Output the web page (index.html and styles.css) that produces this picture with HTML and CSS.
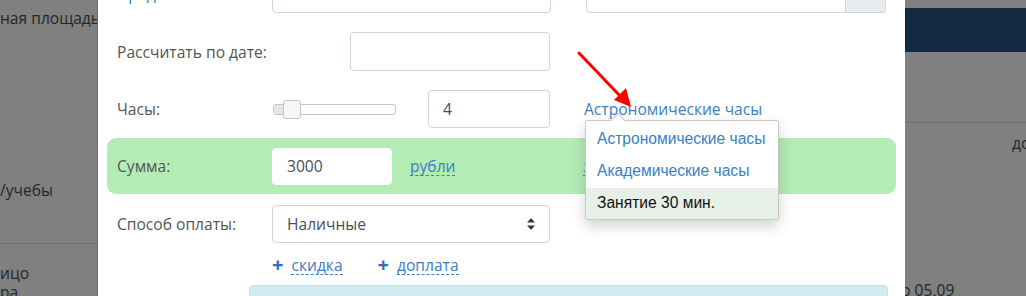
FILE: index.html
```html
<!DOCTYPE html>
<html lang="ru">
<head>
<meta charset="utf-8">
<link rel="stylesheet" href="styles.css">
</head>
<body>
<div class="page">
  <div class="bg-left">
    <div class="bg-text t1">ная площадь, д</div>
    <div class="bg-text t2">/учебы</div>
    <div class="bg-line"></div>
    <div class="bg-text t3">ицо</div>
    <div class="bg-text t4">ра</div>
  </div>
  <div class="bg-right">
    <div class="navy"></div>
    <div class="bg-line r"></div>
    <div class="bg-text t5">до</div>
    <div class="bg-text t6">р 05.09</div>
  </div>

  <div class="modal">
    <div class="row row-top">
      <div class="label blue">Предмет</div>
      <div class="input w279"></div>
      <div class="group">
        <div class="input grow"></div>
        <div class="addon"></div>
      </div>
    </div>

    <div class="row row-date">
      <div class="label wide">Рассчитать по дате:</div>
      <div class="input w200"></div>
    </div>

    <div class="row row-hours">
      <div class="label">Часы:</div>
      <div class="slider">
        <div class="range"></div>
        <div class="thumb"></div>
      </div>
      <div class="input w122 val">4</div>
      <div class="hours-wrap">
        <span class="link">Астрономические часы</span>
        <div class="dropdown">
          <div class="nub"></div>
          <div class="item">Астрономические часы</div>
          <div class="item">Академические часы</div>
          <div class="item active">Занятие 30 мин.</div>
        </div>
      </div>
    </div>

    <div class="sum">
      <div class="label">Сумма:</div>
      <div class="input w120 val">3000</div>
      <span class="link dashed rub">рубли</span>
      <span class="link dashed hidden-link">за</span>
    </div>

    <div class="row row-pay">
      <div class="label">Способ оплаты:</div>
      <div class="input w278 select">
        <span>Наличные</span>
        <svg class="caret" width="10" height="14" viewBox="0 0 10 14"><path d="M5 1 L9 5.5 H1 Z M1 8.5 H9 L5 13 Z" fill="#343a40"/></svg>
      </div>
    </div>

    <div class="row row-links">
      <span class="plus">+</span><span class="link dashed">скидка</span>
      <span class="plus p2">+</span><span class="link dashed">доплата</span>
    </div>

    <div class="info"></div>
  </div>

  <svg class="arrow" width="70" height="70" viewBox="0 0 70 70">
    <line x1="3" y1="3" x2="46" y2="48" stroke="#f00" stroke-width="3" stroke-linecap="round"/>
    <path d="M55 57 L38 50 L50 38 Z" fill="#f00"/>
  </svg>
</div>
</body>
</html>
```

FILE: styles.css
```css
* { box-sizing: border-box; }
html, body { margin: 0; padding: 0; }
body {
  width: 1026px;
  height: 296px;
  overflow: hidden;
  background: #808080;
  font-family: "Open Sans", "Liberation Sans", sans-serif;
  font-size: 15.6px;
  color: #555;
}
.page { position: relative; width: 1026px; height: 296px; overflow: hidden; }

.bg-left { position: absolute; left: 0; top: 0; width: 97px; height: 296px; }
.bg-right { position: absolute; left: 905px; top: 0; width: 121px; height: 296px; }
.bg-text { position: absolute; color: #262626; font-size: 15.6px; line-height: 18px; white-space: nowrap; }
.t1 { left: 0; top: 9px; }
.t2 { left: 0; top: 181px; }
.t3 { left: 0; top: 264px; }
.t4 { left: 0; top: 283px; }
.t5 { left: 107px; top: 134px; }
.t6 { left: -4px; top: 281px; }
.bg-line { position: absolute; left: 0; top: 243px; width: 97px; height: 1px; background: #6f6f6f; }
.bg-line.r { top: 122px; width: 121px; }
.navy { position: absolute; left: 0; top: 8px; width: 121px; height: 44px; background: #142940; }

.modal {
  position: absolute;
  left: 97px;
  top: 0;
  width: 808px;
  height: 296px;
  background: #fff;
  border-left: 1px solid #6a6a6a;
  padding: 0 0 0 19px;
  overflow: hidden;
  z-index: 2;
}

.row { display: flex; align-items: center; }
.label { width: 155px; flex: none; color: #555; }
.label.wide { width: 233px; }
.blue { color: #337ab7; }

.input {
  height: 38px;
  border: 1px solid #ced4da;
  border-radius: 4px;
  background: #fff;
  flex: none;
  display: flex;
  align-items: center;
  padding: 0 14px;
  color: #495057;
  font-size: 15.6px;
}
.w279 { width: 279px; }
.w200 { width: 200px; }
.w122 { width: 122px; }
.w120 { width: 120px; border-color: #fff; }
.w278 { width: 278px; }

.row-top { margin-top: -25px; height: 38px; }
.group { display: flex; width: 300px; margin-left: 35px; height: 38px; }
.input.grow { flex: 1; border-radius: 4px 0 0 4px; }
.addon { width: 40px; height: 38px; background: #e9ecef; border: 1px solid #ced4da; border-left: none; border-radius: 0 4px 4px 0; }

.row-date { margin-top: 19px; }
.row-date .input { height: 39px; }

.row-hours { margin-top: 19px; height: 38px; }
.slider {
  position: relative;
  width: 123px;
  height: 11px;
  border: 1px solid #c5c5c5;
  border-radius: 3px;
  background: #fff;
  margin-left: 1px;
  flex: none;
}
.range { position: absolute; left: 0; top: 0; width: 10px; height: 9px; background: #e6e6e6; border-radius: 2px 0 0 2px; }
.thumb {
  position: absolute;
  left: 9px;
  top: -5px;
  width: 18px;
  height: 19px;
  background: #f6f6f6;
  border: 1px solid #c5c5c5;
  border-radius: 3px;
}
.row-hours .input { margin-left: 32px; }
.hours-wrap { position: relative; margin-left: 34px; line-height: 20px; }
.link { color: #3a7fc1; }
.dashed { border-bottom: 1px dashed #3a7fc1; line-height: 18px; }

.dropdown {
  position: absolute;
  left: 1px;
  top: 21px;
  width: 194px;
  background: #fff;
  border: 1px solid #c8c8c8;
  border-radius: 2px;
  box-shadow: 0 6px 14px rgba(0,0,0,0.18);
  padding-top: 3px;
  z-index: 5;
  font-family: "Liberation Sans", Arial, sans-serif;
  font-size: 15.6px;
}
.nub {
  position: absolute;
  left: 27px;
  top: -6px;
  width: 10px;
  height: 10px;
  background: #fff;
  border-left: 1px solid #c8c8c8;
  border-top: 1px solid #c8c8c8;
  transform: rotate(45deg);
}
.item { height: 32px; line-height: 30px; padding-left: 11px; color: #3a7fc1; position: relative; white-space: nowrap; }
.item:first-of-type { height: 28px; line-height: 24px; }
.item.active { background: #e6f0e6; color: #111; height: 31px; line-height: 30px; }

.sum {
  display: flex;
  align-items: center;
  margin: 10px 0 0 -10px;
  width: 789px;
  height: 56px;
  padding-left: 10px;
  background: #b3ecb4;
  border-radius: 9px;
}
.sum .input { height: 37px; }
.rub { margin-left: 18px; }
.hidden-link { margin-left: 128px; }

.row-pay { margin-top: 11px; }
.select { justify-content: space-between; padding-right: 13px; }
.caret { display: block; }

.row-links { margin-top: 13px; padding-left: 155px; height: 18px; }
.plus { color: #2f6fb0; font-weight: 700; font-size: 20px; margin-right: 8px; line-height: 18px; }
.plus.p2 { margin-left: 35px; }

.info {
  margin: 11px 0 0 132px;
  width: 639px;
  height: 40px;
  background: #d1ecf1;
  border: 1px solid #bee5eb;
  border-radius: 4px;
}

.arrow { position: absolute; left: 576px; top: 50px; z-index: 10; }
```
